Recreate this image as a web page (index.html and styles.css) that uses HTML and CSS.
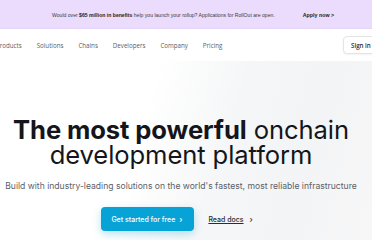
FILE: index.html
```html
<!DOCTYPE html>
<html>
<head>
<meta charset="utf-8">
<link rel="stylesheet" href="styles.css">
</head>
<body>
<div class="banner">
  <span class="banner-text">Would over <b>$65 million in benefits</b> help you launch your rollup? Applications for RollOut are open.</span>
  <span class="banner-cta">Apply now &gt;</span>
</div>
<header class="nav">
  <ul class="nav-links">
    <li>Products</li>
    <li>Solutions</li>
    <li>Chains</li>
    <li>Developers</li>
    <li>Company</li>
    <li>Pricing</li>
  </ul>
  <button class="signin">Sign in</button>
</header>
<main class="hero">
  <h1 class="title"><b>The most powerful</b> onchain<br>development platform</h1>
  <p class="sub">Build with industry-leading solutions on the world's fastest, most reliable infrastructure</p>
  <div class="actions">
    <a class="primary">Get started for free <span class="chev">&#8250;</span></a>
    <a class="secondary"><span class="ul">Read docs</span> <span class="chev">&#8250;</span></a>
  </div>
</main>
</body>
</html>
```
FILE: styles.css
```css
* { box-sizing: border-box; }
html, body { margin: 0; padding: 0; }
body {
  width: 372px;
  height: 240px;
  overflow: hidden;
  font-family: Inter, "Open Sans", sans-serif;
  background: #fff;
  color: #16181d;
}
.banner {
  height: 29px;
  background: #ebdcfd;
  border-bottom: 1px solid #e4d4f8;
  display: flex;
  align-items: center;
  font-family: "Liberation Sans", Arial, sans-serif;
  font-size: 5.1px;
  color: #3a3a45;
  padding-left: 52px;
  padding-top: 1px;
  white-space: nowrap;
}
.banner-text b { color: #1b1b22; }
.banner-cta {
  margin-left: 28px;
  font-weight: bold;
  color: #1b1b22;
  font-size: 5.3px;
}
.nav {
  height: 32px;
  display: flex;
  align-items: center;
  justify-content: space-between;
  font-family: "Open Sans", sans-serif;
  font-size: 6.2px;
  color: #5a5d66;
  white-space: nowrap;
}
.nav-links {
  list-style: none;
  margin: 0 0 0 -4px;
  padding: 0;
  display: flex;
  gap: 15px;
}
.signin {
  margin-right: -12px;
  height: 18px;
  width: 41px;
  border: 1px solid #e2e4e8;
  border-radius: 4px;
  background: #fff;
  font-family: "Open Sans", sans-serif;
  font-size: 6.2px;
  font-weight: 600;
  color: #2c2f36;
  padding: 0 0 0 7px;
  text-align: left;
  box-shadow: 0 1px 2px rgba(0,0,0,0.05);
}
.hero {
  height: 179px;
  background: linear-gradient(105deg, #ffffff 0%, #ffffff 38%, #f5f6f7 60%, #f3f4f5 80%, #f7f7f8 100%);
  display: flex;
  flex-direction: column;
  align-items: center;
  padding-top: 56px;
  padding-right: 10px;
}
.title {
  margin: 0;
  font-family: Inter, sans-serif;
  font-weight: 400;
  font-size: 25.6px;
  line-height: 25px;
  letter-spacing: -0.1px;
  text-align: center;
  color: #14161b;
  white-space: nowrap;
}
.title b { font-weight: 700; }
.sub {
  margin: 14px 0 0;
  font-family: Inter, sans-serif;
  font-size: 8.6px;
  color: #5b5f68;
  white-space: nowrap;
}
.actions {
  margin-top: 16px;
  display: flex;
  align-items: center;
  gap: 14px;
  margin-left: -8px;
}
.primary {
  background: #08a3d6;
  color: #fff;
  font-family: Inter, sans-serif;
  font-size: 7px;
  font-weight: 500;
  height: 24px;
  width: 93px;
  border-radius: 4px;
  display: flex;
  align-items: center;
  padding-left: 10px;
  box-shadow: 0 3px 8px rgba(8,163,214,0.3);
  white-space: nowrap;
}
.chev { margin-left: 4px; font-size: 8px; }
.secondary {
  font-family: Inter, sans-serif;
  font-size: 7px;
  font-weight: 500;
  color: #2a2d33;
  white-space: nowrap;
}
.ul { text-decoration: underline; }
```
